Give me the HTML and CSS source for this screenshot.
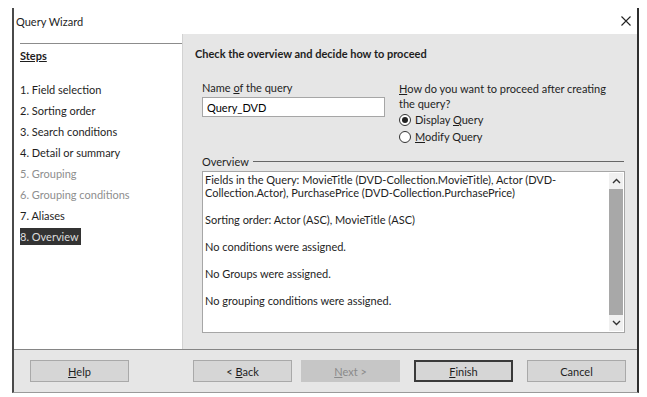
FILE: index.html
```html
<!DOCTYPE html>
<html lang="en">
<head>
  <meta charset="UTF-8" />
  <title>Query Wizard</title>
  <link rel="stylesheet" href="styles.css">
</head>
<body>
  <div class="window">
    <div class="titlebar">
      <span class="title">Query Wizard</span>
      <svg class="close" width="10" height="10" viewBox="0 0 10 10"><path d="M0.5 0.5 L9.5 9.5 M9.5 0.5 L0.5 9.5" stroke="#222" stroke-width="1.1"/></svg>
    </div>

    <div class="main">
      <!-- steps list -->
      <div class="steps">
        <div class="steps-rule"></div>
        <div class="steps-head">Steps</div>
        <ul class="step-list">
          <li>1. Field selection</li>
          <li>2. Sorting order</li>
          <li>3. Search conditions</li>
          <li>4. Detail or summary</li>
          <li class="disabled">5. Grouping</li>
          <li class="disabled">6. Grouping conditions</li>
          <li>7. Aliases</li>
          <li><span class="current">8. Overview</span></li>
        </ul>
      </div>

      <!-- page content -->
      <div class="page">
        <div class="page-head">Check the overview and decide how to proceed</div>

        <div class="form-row">
          <div class="name-col">
            <label for="queryName">Name <u>o</u>f the query</label>
            <input type="text" id="queryName" value="Query_DVD" />
          </div>
          <div class="proceed-col">
            <div class="proceed-label"><u>H</u>ow do you want to proceed after creating the query?</div>
            <label class="radio"><span class="dot checked"></span><span>Display <u>Q</u>uery</span></label>
            <label class="radio"><span class="dot"></span><span><u>M</u>odify Query</span></label>
          </div>
        </div>

        <div class="group-title"><span>Overview</span></div>
        <div class="overview">
          <div class="overview-text">
            <p>Fields in the Query: MovieTitle (DVD-Collection.MovieTitle), Actor (DVD-<br>Collection.Actor), PurchasePrice (DVD-Collection.PurchasePrice)</p>
            <p>Sorting order: Actor (ASC), MovieTitle (ASC)</p>
            <p>No conditions were assigned.</p>
            <p>No Groups were assigned.</p>
            <p>No grouping conditions were assigned.</p>
          </div>
          <div class="scrollbar">
            <svg class="arrow" width="9" height="6" viewBox="0 0 9 6"><path d="M1 5 L4.5 1.5 L8 5" fill="none" stroke="#333" stroke-width="1.4"/></svg>
            <div class="thumb"></div>
            <svg class="arrow" width="9" height="6" viewBox="0 0 9 6"><path d="M1 1 L4.5 4.5 L8 1" fill="none" stroke="#333" stroke-width="1.4"/></svg>
          </div>
        </div>
      </div>
    </div>

    <div class="footer">
      <button class="btn help"><u>H</u>elp</button>
      <button class="btn back">&lt; <u>B</u>ack</button>
      <button class="btn next" disabled><u>N</u>ext &gt;</button>
      <button class="btn finish"><u>F</u>inish</button>
      <button class="btn cancel">Cancel</button>
    </div>
  </div>
</body>
</html>
```

FILE: styles.css
```css
body {
  margin: 0;
  background: #fff;
  font-family: Lato, "Open Sans", sans-serif;
  font-size: 11px;
  color: #1e1e1e;
}
.window {
  width: 627px;
  height: 385px;
  margin: 8px 0 0 12px;
  box-sizing: border-box;
  border-left: 2px solid #4a4a4a;
  border-right: 2px solid #2e2e2e;
  border-bottom: 1px solid #9a9a9a;
  display: flex;
  flex-direction: column;
}
.titlebar {
  height: 26px;
  display: flex;
  align-items: center;
  justify-content: space-between;
  padding: 0 6px 0 2px;
  background: #fff;
}
.title {
  font-size: 11px;
}
.close {
  display: block;
}
.main {
  display: flex;
  height: 315px;
}
.steps {
  width: 170px;
  background: #fff;
}
.steps-rule {
  margin: 9px 0 0 6px;
  border-top: 1px solid #8c8c8c;
}
.steps-head {
  margin: 5px 0 0 6px;
  font-weight: bold;
  text-decoration: underline;
}
.step-list {
  list-style: none;
  margin: 17px 0 0 6px;
  padding: 0;
}
.step-list li {
  height: 21px;
  line-height: 21px;
}
.step-list li.disabled {
  color: #8e8e8e;
}
.current {
  background: #333;
  color: #ddd;
  padding: 2px 2px 2px 0;
}
.page {
  flex: 1;
  background: #e6e6e6;
  border-left: 1px solid #d2d2d2;
  padding: 13px 12px 0 12px;
}
.page-head {
  font-weight: bold;
}
.form-row {
  display: flex;
  margin: 21px 0 0 7px;
}
.name-col {
  width: 183px;
}
.name-col label {
  display: block;
  margin-bottom: 3px;
}
.name-col input {
  width: 183px;
  height: 20px;
  box-sizing: border-box;
  border: 1px solid #a6a6a6;
  background: #fff;
  font: inherit;
  padding: 0 4px;
  margin: 0;
}
.proceed-col {
  margin-left: 14px;
  width: 210px;
  line-height: 15px;
}
.radio {
  display: flex;
  align-items: center;
  height: 17px;
}
.dot {
  width: 10px;
  height: 10px;
  border: 1px solid #333;
  border-radius: 50%;
  background: #fff;
  margin-right: 4px;
  position: relative;
}
.dot.checked::after {
  content: "";
  position: absolute;
  left: 2px;
  top: 2px;
  width: 6px;
  height: 6px;
  border-radius: 50%;
  background: #222;
}
.group-title {
  display: flex;
  align-items: center;
  margin: 10px 0 0 7px;
  width: 422px;
}
.group-title::after {
  content: "";
  flex: 1;
  border-top: 1px solid #666;
  margin-left: 4px;
}
.overview {
  margin: 3px 0 0 7px;
  width: 423px;
  height: 162px;
  box-sizing: border-box;
  border: 1px solid #a6a6a6;
  background: #fff;
  display: flex;
}
.overview-text {
  flex: 1;
  padding: 1px 0 0 2px;
  line-height: 13.4px;
  white-space: nowrap;
}
.overview-text p {
  margin: 0 0 13.4px 0;
}
.scrollbar {
  width: 14px;
  margin: 1px 1px 1px 0;
  background: #f0f0f0;
  display: flex;
  flex-direction: column;
  align-items: center;
}
.arrow {
  margin: 5px 0;
}
.thumb {
  flex: 1;
  width: 14px;
  background: #a8a8a8;
}
.footer {
  flex: 1;
  background: #e6e6e6;
  border-top: 1px solid #858585;
  display: flex;
  align-items: center;
  padding-left: 16px;
}
.btn {
  width: 99px;
  height: 22px;
  box-sizing: border-box;
  border: 1px solid #a9a9a9;
  background: #d6d6d6;
  font: inherit;
  color: #1e1e1e;
  padding: 0;
  margin: 0;
}
.back {
  margin-left: 64px;
}
.next {
  margin-left: 9px;
  background: #c6c6c6;
  border-color: #c6c6c6;
  color: #8a8a8a;
}
.finish {
  margin-left: 14px;
  border: 2px solid #3a3a3a;
}
.cancel {
  margin-left: 14px;
}
```
